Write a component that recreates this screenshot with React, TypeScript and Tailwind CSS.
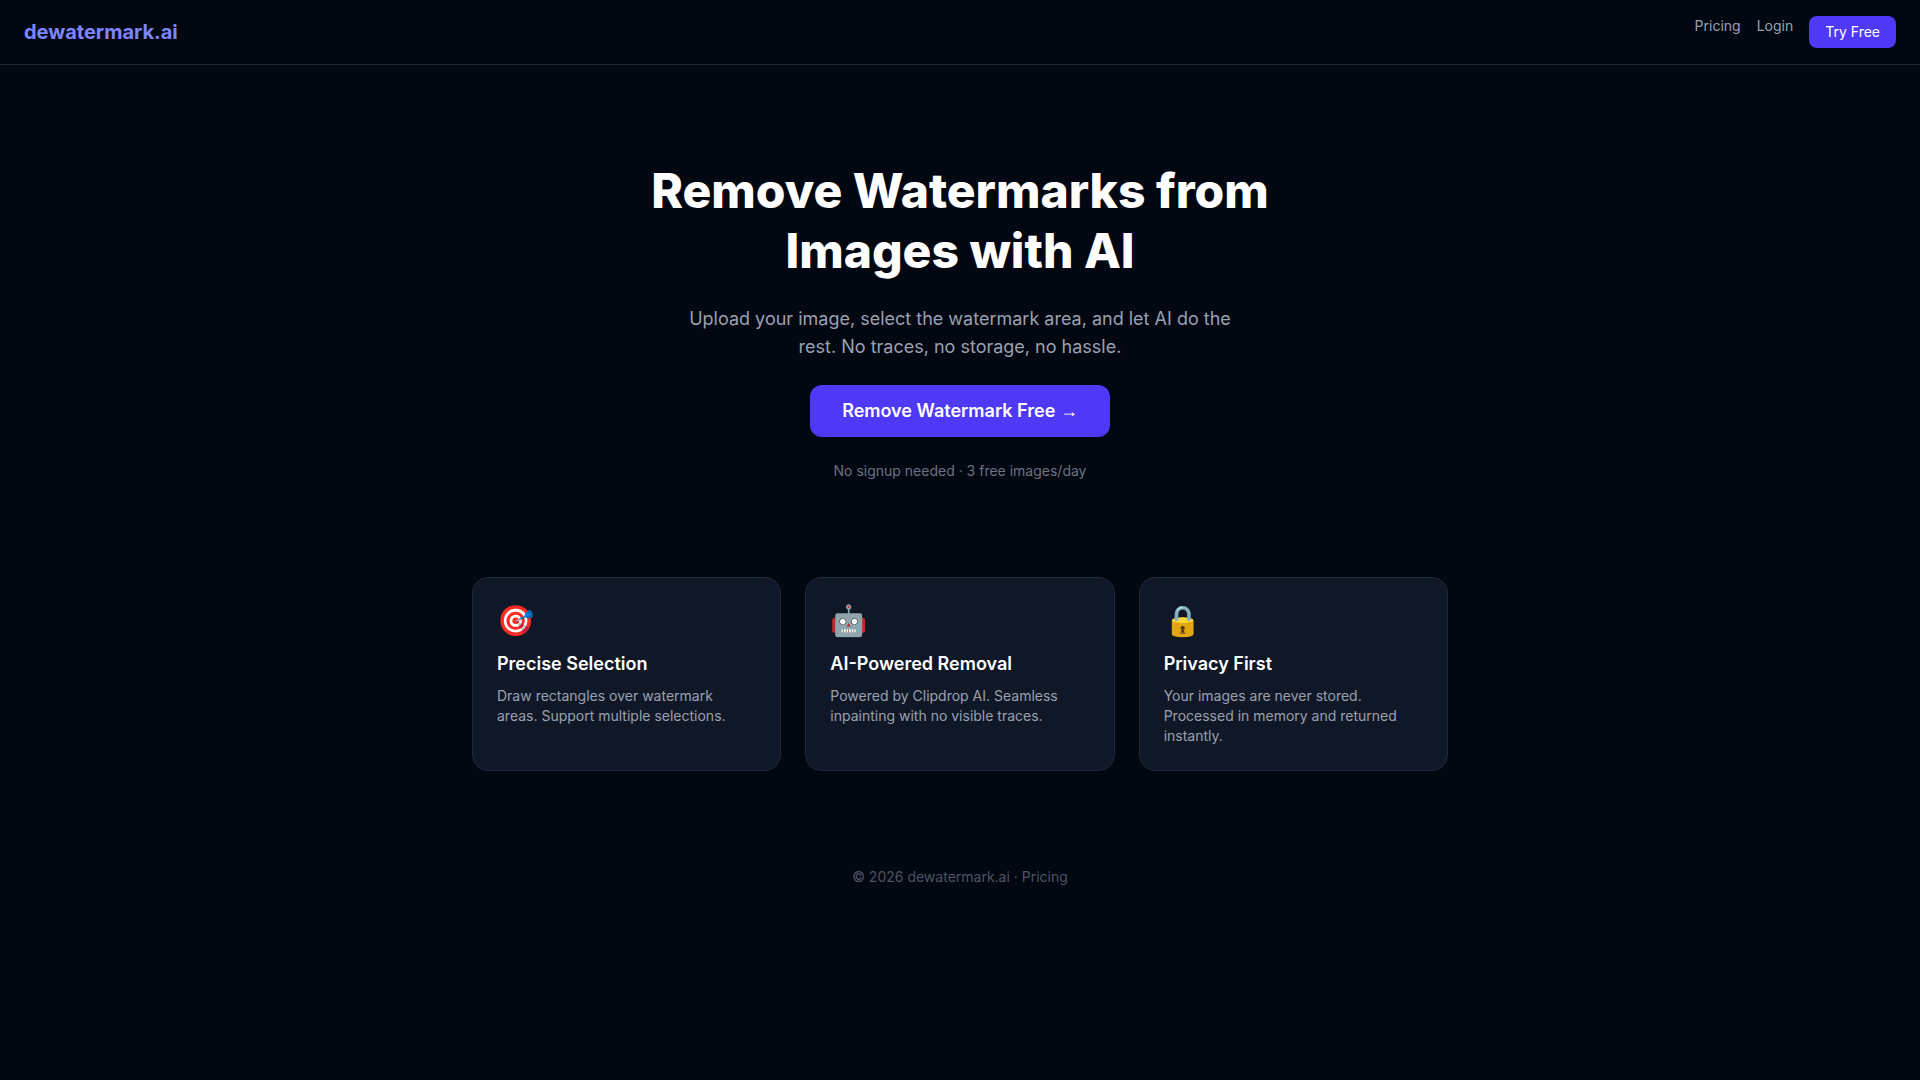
import React from "react";

const FEATURES = [
  {
    icon: "🎯",
    title: "Precise Selection",
    desc: "Draw rectangles over watermark areas. Support multiple selections.",
  },
  {
    icon: "🤖",
    title: "AI-Powered Removal",
    desc: "Powered by Clipdrop AI. Seamless inpainting with no visible traces.",
  },
  {
    icon: "🔒",
    title: "Privacy First",
    desc: "Your images are never stored. Processed in memory and returned instantly.",
  },
];

export default function App() {
  return (
    <div className="min-h-screen bg-gray-950 font-['Inter',sans-serif] text-white">
      <nav className="flex items-center justify-between border-b border-gray-800 px-6 py-4">
        <a href="#" className="text-xl font-bold text-indigo-400">
          dewatermark.ai
        </a>
        <div className="flex gap-4 text-sm">
          <a href="#pricing" className="text-gray-400 hover:text-white">
            Pricing
          </a>
          <a href="#login" className="text-gray-400 hover:text-white">
            Login
          </a>
          <a href="#editor" className="rounded-lg bg-indigo-600 px-4 py-1.5 hover:bg-indigo-500">
            Try Free
          </a>
        </div>
      </nav>

      <main>
        <section className="mx-auto max-w-3xl px-6 py-24 text-center">
          <h1 className="mb-6 text-5xl leading-tight font-extrabold">
            Remove Watermarks from Images with AI
          </h1>
          <p className="mx-auto mb-6 max-w-xl text-lg text-gray-400">
            Upload your image, select the watermark area, and let AI do the rest. No traces, no storage, no hassle.
          </p>
          <a
            href="#editor"
            className="inline-block rounded-xl bg-indigo-600 px-8 py-3 text-lg font-semibold hover:bg-indigo-500"
          >
            Remove Watermark Free <span className="font-['Liberation_Sans',sans-serif] font-normal">→</span>
          </a>
          <p className="mt-6 text-sm text-gray-500">No signup needed · 3 free images/day</p>
        </section>

        <section className="mx-auto grid max-w-5xl grid-cols-1 gap-6 px-6 pb-24 md:grid-cols-3">
          {FEATURES.map((f) => (
            <div key={f.title} className="rounded-2xl border border-gray-800 bg-gray-900 p-6">
              <div className="mb-3 text-3xl">{f.icon}</div>
              <h3 className="mb-2 text-lg font-semibold">{f.title}</h3>
              <p className="text-sm text-gray-400">{f.desc}</p>
            </div>
          ))}
        </section>
      </main>

      <footer className="text-center text-sm text-gray-600">
        © 2026 dewatermark.ai · <a href="#pricing">Pricing</a>
      </footer>
    </div>
  );
}
